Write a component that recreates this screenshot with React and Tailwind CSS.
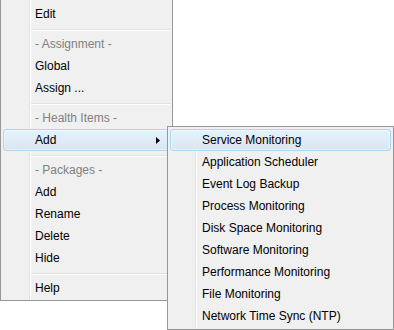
import { useState } from 'react';

const mainItems = [
    { label: 'Edit' },
    { sep: true },
    { label: '- Assignment -', header: true },
    { label: 'Global' },
    { label: 'Assign ...' },
    { sep: true },
    { label: '- Health Items -', header: true },
    { label: 'Add', submenu: true, active: true },
    { sep: true },
    { label: '- Packages -', header: true },
    { label: 'Add' },
    { label: 'Rename' },
    { label: 'Delete' },
    { label: 'Hide' },
    { sep: true },
    { label: 'Help' },
];

const healthItems = [
    'Service Monitoring',
    'Application Scheduler',
    'Event Log Backup',
    'Process Monitoring',
    'Disk Space Monitoring',
    'Software Monitoring',
    'Performance Monitoring',
    'File Monitoring',
    'Network Time Sync (NTP)',
];

function MenuItem({ label, header, submenu, active }) {
    return (
        <div
            className={`flex h-[22px] items-center justify-between rounded-[3px] border pr-[9px] pl-[31px] leading-[20px] ${
                active
                    ? 'border-[#a9d7ee] bg-[linear-gradient(to_bottom,#e7f1fa,#d8e7f5)] shadow-[inset_0_0_0_1px_rgba(255,255,255,0.45)]'
                    : 'border-transparent'
            } ${header ? 'text-[#808080]' : 'text-black'}`}
        >
            <span>{label}</span>
            {submenu ? (
                <svg width="4" height="7" viewBox="0 0 4 7">
                    <polygon points="0,0 4,3.5 0,7" fill="#000" />
                </svg>
            ) : null}
        </div>
    );
}

function Separator() {
    return (
        <div className="ml-[28px] h-[8px] pt-[4px]">
            <div className="h-px bg-[#e0e0e0]" />
            <div className="h-px bg-white" />
        </div>
    );
}

export default function App() {
    const [hovered] = useState(0);

    return (
        <div className="relative h-[330px] w-[394px] overflow-hidden bg-white font-['Liberation_Sans',Arial,sans-serif] text-[12px]">
            <div className="w-[173px] border-x border-b border-[#979797] bg-[#f0f0f0] bg-[linear-gradient(to_right,#f0f0f0_28px,#e2e3e3_28px,#e2e3e3_29px,#ffffff_29px,#ffffff_30px,#f0f0f0_30px)] px-[2px] pt-[3px] pb-px">
                {mainItems.map((item, index) =>
                    item.sep ? (
                        <Separator key={index} />
                    ) : (
                        <MenuItem key={index} {...item} />
                    ),
                )}
            </div>

            <div className="absolute top-[126px] left-[167px] w-[227px] border border-[#979797] bg-[#f0f0f0] bg-[linear-gradient(to_right,#f0f0f0_27px,#e2e3e3_27px,#e2e3e3_28px,#ffffff_28px,#ffffff_29px,#f0f0f0_29px)] p-[2px]">
                {healthItems.map((label, index) => (
                    <MenuItem
                        key={label}
                        label={label}
                        active={index === hovered}
                    />
                ))}
            </div>
        </div>
    );
}
